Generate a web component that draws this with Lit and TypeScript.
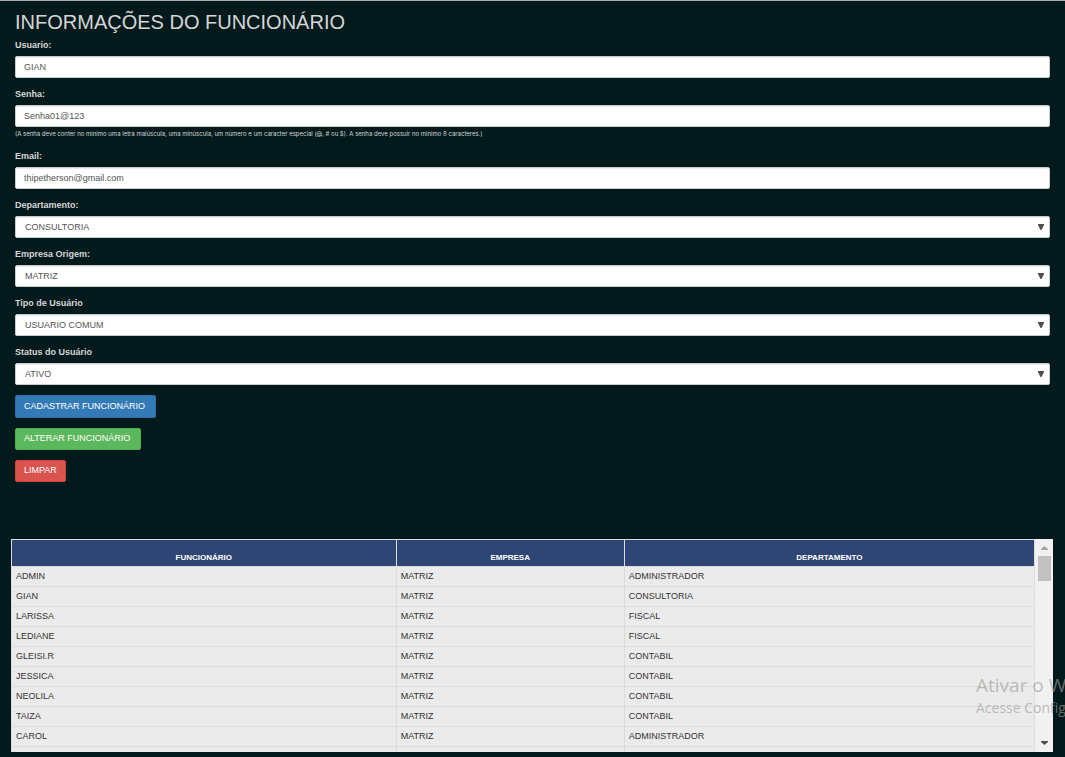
import { LitElement, html, css } from "lit";
import { customElement } from "lit/decorators.js";

interface Field {
  id: string;
  label: string;
  value: string;
  select?: boolean;
  help?: string;
}

const FIELDS: Field[] = [
  { id: "usuario", label: "Usuario:", value: "GIAN" },
  {
    id: "senha",
    label: "Senha:",
    value: "Senha01@123",
    help: "(A senha deve conter no mínimo uma letra maiúscula, uma minúscula, um número e um caracter especial (@, # ou $). A senha deve possuir no mínimo 8 caracteres.)",
  },
  { id: "email", label: "Email:", value: "thipetherson@gmail.com" },
  { id: "departamento", label: "Departamento:", value: "CONSULTORIA", select: true },
  { id: "empresa", label: "Empresa Origem:", value: "MATRIZ", select: true },
  { id: "tipo", label: "Tipo de Usuário", value: "USUARIO COMUM", select: true },
  { id: "status", label: "Status do Usuário", value: "ATIVO", select: true },
];

const ROWS: string[][] = [
  ["ADMIN", "MATRIZ", "ADMINISTRADOR"],
  ["GIAN", "MATRIZ", "CONSULTORIA"],
  ["LARISSA", "MATRIZ", "FISCAL"],
  ["LEDIANE", "MATRIZ", "FISCAL"],
  ["GLEISI.R", "MATRIZ", "CONTABIL"],
  ["JESSICA", "MATRIZ", "CONTABIL"],
  ["NEOLILA", "MATRIZ", "CONTABIL"],
  ["TAIZA", "MATRIZ", "CONTABIL"],
  ["CAROL", "MATRIZ", "ADMINISTRADOR"],
  ["", "", ""],
];

@customElement("app-root")
export class AppRoot extends LitElement {
  static styles = css`
    :host {
      display: block;
      position: relative;
      box-sizing: border-box;
      min-height: 100vh;
      overflow: hidden;
      padding-bottom: 5px;
      border-top: 1px solid #a9adad;
      background: #031a1c;
      color: #d6d6d6;
      font-family: "Liberation Sans", Arial, sans-serif;
      font-size: 9px;
    }
    * {
      box-sizing: border-box;
    }
    .form {
      display: flex;
      flex-direction: column;
      padding: 9px 15px 0;
    }
    .title {
      margin: 0;
      font-size: 20px;
      line-height: 24px;
      font-weight: 400;
    }
    .field {
      display: flex;
      flex-direction: column;
      margin-bottom: 5px;
    }
    .label {
      padding: 5px 0;
      line-height: 12px;
      font-weight: 700;
    }
    .control {
      width: 100%;
      height: 22px;
      margin: 0;
      padding: 0 8px 1px;
      border: 1px solid #ccc;
      border-radius: 2px;
      background: #fff;
      box-shadow: inset 0 1px 1px rgba(0, 0, 0, 0.08);
      color: #555;
      font: inherit;
      outline: none;
    }
    .picker {
      display: grid;
      align-items: center;
    }
    .picker > * {
      grid-area: 1 / 1;
    }
    .picker .control {
      appearance: none;
      padding: 0 9px 1px;
    }
    .arrow {
      justify-self: end;
      width: 6px;
      height: 6px;
      margin-right: 6px;
      fill: #4d4d4d;
      pointer-events: none;
    }
    .help {
      padding-top: 1px;
      font-family: Inter, "Liberation Sans", sans-serif;
      font-size: 6px;
      line-height: 12px;
    }
    .actions {
      display: flex;
      flex-direction: column;
      align-items: flex-start;
      gap: 10px;
      margin-top: 5px;
    }
    .btn {
      height: 22px;
      padding: 0 10px 2px 8px;
      border: 1px solid;
      border-radius: 2px;
      color: #fff;
      font: inherit;
      cursor: pointer;
    }
    .primary {
      height: 23px;
      background: #337ab7;
      border-color: #2e6da4;
    }
    .success {
      background: #5cb85c;
      border-color: #4cae4c;
    }
    .danger {
      padding-right: 8px;
      background: #d9534f;
      border-color: #d43f3a;
    }
    .panel {
      display: flex;
      align-items: flex-start;
      height: 213px;
      margin: 57px 12px 0 11px;
      overflow: hidden;
      background: #ebebeb;
    }
    .grid {
      flex: 1;
      min-width: 0;
      border-collapse: separate;
      border-spacing: 0;
      table-layout: fixed;
      border-top: 1px solid #ddd;
      border-left: 1px solid #ddd;
      color: #333;
    }
    .grid th,
    .grid td {
      padding: 0 4px;
      border-right: 1px solid #dcdcdc;
      border-bottom: 1px solid #dcdcdc;
      text-align: left;
    }
    .grid th {
      height: 27px;
      padding-top: 8px;
      background: #2f4675;
      color: #fff;
      font-size: 8px;
      text-align: center;
    }
    .grid td {
      height: 20px;
      padding-bottom: 2px;
      background: #ebebeb;
    }
    .name {
      width: 37.6%;
    }
    .company {
      width: 22.3%;
    }
    .bar {
      display: flex;
      flex-direction: column;
      align-items: center;
      align-self: stretch;
      width: 18px;
      padding-left: 1px;
      background: #f1f1f1;
    }
    .thumb {
      width: 13px;
      height: 25px;
      background: #c1c1c1;
    }
    .track {
      flex: 1;
    }
    .step {
      width: 17px;
      height: 17px;
      fill: #a3a3a3;
    }
    .down {
      fill: #505050;
    }
    .notice {
      position: absolute;
      left: calc(100% - 89px);
      bottom: 39px;
      color: rgba(155, 155, 155, 0.65);
      font-family: "Open Sans", "Noto Sans", sans-serif;
      font-size: 14px;
      line-height: 20px;
      white-space: nowrap;
      pointer-events: none;
    }
    .notice-title {
      font-size: 19px;
      line-height: 25px;
    }
  `;

  private control(f: Field) {
    if (!f.select) {
      return html`<input class="control" id=${f.id} type="text" .value=${f.value} />`;
    }
    return html`<div class="picker">
      <select class="control" id=${f.id}>
        <option>${f.value}</option>
      </select>
      <svg class="arrow" viewBox="0 0 6 6" aria-hidden="true"><path d="M0 0h6v1L3.500 6h-1L0 1z" /></svg>
    </div>`;
  }

  render() {
    return html`
      <form class="form" @submit=${(e: Event) => e.preventDefault()}>
        <h1 class="title">INFORMAÇÕES DO FUNCIONÁRIO</h1>
        ${FIELDS.map(
          (f) => html`<div class="field">
            <label class="label" for=${f.id}>${f.label}</label>
            ${this.control(f)}
            ${f.help ? html`<span class="help">${f.help}</span>` : ""}
          </div>`
        )}
        <div class="actions">
          <button class="btn primary" type="submit">CADASTRAR FUNCIONÁRIO</button>
          <button class="btn success" type="button">ALTERAR FUNCIONÁRIO</button>
          <button class="btn danger" type="reset">LIMPAR</button>
        </div>
      </form>
      <div class="panel">
        <table class="grid">
          <thead>
            <tr>
              <th class="name">FUNCIONÁRIO</th>
              <th class="company">EMPRESA</th>
              <th>DEPARTAMENTO</th>
            </tr>
          </thead>
          <tbody>
            ${ROWS.map((r) => html`<tr>${r.map((c) => html`<td>${c}</td>`)}</tr>`)}
          </tbody>
        </table>
        <div class="bar" aria-hidden="true">
          <svg class="step" viewBox="0 0 17 17"><path d="M5 11h7v-1L8.500 7 5 10z" /></svg>
          <div class="thumb"></div>
          <div class="track"></div>
          <svg class="step down" viewBox="0 0 17 17"><path d="M5 6h7v1L8.500 10 5 7z" /></svg>
        </div>
      </div>
      <div class="notice">
        <div class="notice-title">Ativar o W</div>
        <div>Acesse Config</div>
      </div>
    `;
  }
}
